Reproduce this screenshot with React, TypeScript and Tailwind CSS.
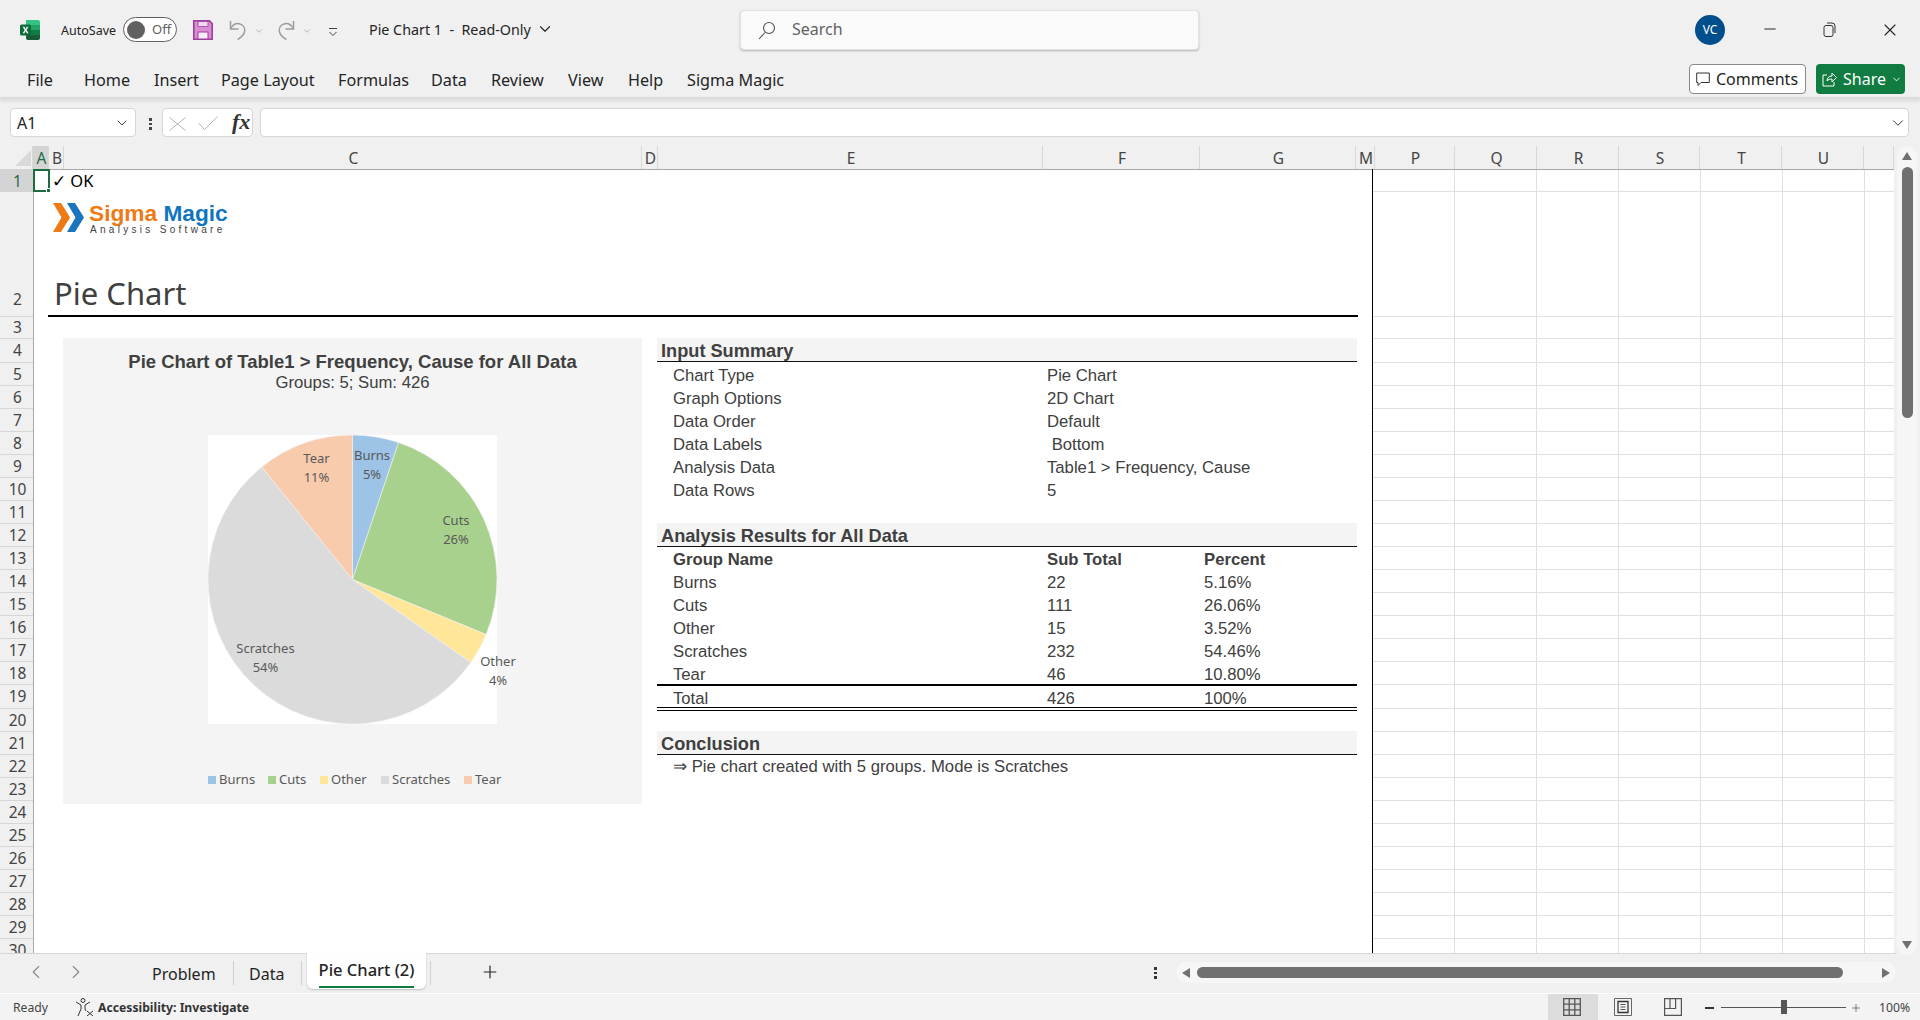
import { ChevronDown, ChevronLeft, ChevronRight, Minus, Plus, X } from "lucide-react";

const columns = [
  { label: "", w: 33 },
  { label: "A", w: 16 },
  { label: "B", w: 15 },
  { label: "C", w: 578 },
  { label: "D", w: 16 },
  { label: "E", w: 385 },
  { label: "F", w: 157 },
  { label: "G", w: 156 },
  { label: "M", w: 19 },
  { label: "P", w: 80 },
  { label: "Q", w: 82 },
  { label: "R", w: 82 },
  { label: "S", w: 81 },
  { label: "T", w: 82 },
  { label: "U", w: 82 },
  { label: "", w: 30 },
];

const rowBottoms = [
  191, 316, 338, 362, 385, 408, 431, 454, 477, 500, 523, 546, 569, 592, 615, 638, 661, 684, 708, 731,
  754, 777, 800, 823, 846, 869, 892, 915, 938, 961,
];

const gridXs = [1455, 1537, 1619, 1701, 1783, 1865];

const tabs = [
  { label: "File", x: 27 },
  { label: "Home", x: 84 },
  { label: "Insert", x: 154 },
  { label: "Page Layout", x: 221 },
  { label: "Formulas", x: 338 },
  { label: "Data", x: 431 },
  { label: "Review", x: 491 },
  { label: "View", x: 568 },
  { label: "Help", x: 628 },
  { label: "Sigma Magic", x: 687 },
];

const slices = [
  { name: "Burns", value: 22, color: "#9dc3e6" },
  { name: "Cuts", value: 111, color: "#a9d18e" },
  { name: "Other", value: 15, color: "#ffe699" },
  { name: "Scratches", value: 232, color: "#dbdbdb" },
  { name: "Tear", value: 46, color: "#f8cbad" },
];

const pieLabels = [
  { a: "Burns", b: "5%", x: 372, y: 455 },
  { a: "Tear", b: "11%", x: 316.5, y: 458 },
  { a: "Cuts", b: "26%", x: 456, y: 520 },
  { a: "Scratches", b: "54%", x: 265.5, y: 648 },
  { a: "Other", b: "4%", x: 498, y: 661 },
];

const legend = [
  { name: "Burns", x: 208, color: "bg-[#9dc3e6]" },
  { name: "Cuts", x: 268, color: "bg-[#a9d18e]" },
  { name: "Other", x: 320, color: "bg-[#ffe699]" },
  { name: "Scratches", x: 381, color: "bg-[#dbdbdb]" },
  { name: "Tear", x: 464, color: "bg-[#f8cbad]" },
];

const summaryRows = [
  { y: 374, a: "Chart Type", b: "Pie Chart" },
  { y: 397, a: "Graph Options", b: "2D Chart" },
  { y: 420, a: "Data Order", b: "Default" },
  { y: 443, a: "Data Labels", b: "\u00a0Bottom" },
  { y: 466, a: "Analysis Data", b: "Table1 > Frequency, Cause" },
  { y: 489, a: "Data Rows", b: "5" },
];

const resultRows = [
  { y: 558, a: "Group Name", b: "Sub Total", c: "Percent", bold: true },
  { y: 581, a: "Burns", b: "22", c: "5.16%" },
  { y: 604, a: "Cuts", b: "111", c: "26.06%" },
  { y: 627, a: "Other", b: "15", c: "3.52%" },
  { y: 650, a: "Scratches", b: "232", c: "54.46%" },
  { y: 673, a: "Tear", b: "46", c: "10.80%" },
  { y: 697, a: "Total", b: "426", c: "100%" },
];

function slicePath(startPct: number, endPct: number) {
  const cx = 144.5;
  const cy = 144.5;
  const r = 144.5;
  const a0 = (startPct * Math.PI * 2) - Math.PI / 2;
  const a1 = (endPct * Math.PI * 2) - Math.PI / 2;
  const large = endPct - startPct > 0.5 ? 1 : 0;
  return `M${cx} ${cy}L${cx + r * Math.cos(a0)} ${cy + r * Math.sin(a0)}A${r} ${r} 0 ${large} 1 ${cx + r * Math.cos(a1)} ${cy + r * Math.sin(a1)}Z`;
}

function PieChart() {
  let acc = 0;
  return (
    <svg width="289" height="289" viewBox="0 0 289 289" className="absolute left-[208px] top-[435px] bg-white">
      {slices.map((s) => {
        const start = acc;
        acc += s.value / 426;
        return <path key={s.name} d={slicePath(start, acc)} fill={s.color} stroke="#f2f2f2" strokeWidth="0.6" />;
      })}
    </svg>
  );
}

function ExcelIcon() {
  return (
    <svg width="20" height="20" viewBox="0 0 20 20" className="absolute left-[20px] top-[20px]">
      <path d="M6 0h12a2 2 0 0 1 2 2v3h-14z" fill="#33c481" />
      <rect x="6" y="5" width="14" height="5" fill="#21a366" />
      <rect x="6" y="10" width="14" height="5" fill="#107c41" />
      <path d="M6 15h14v3a2 2 0 0 1-2 2h-10a2 2 0 0 1-2-2z" fill="#185c37" />
      <rect x="0" y="4.500" width="11" height="11" rx="1.500" fill="#0f6c3a" />
      <path d="M2.700 6.800h1.700l1.200 2.100 1.200-2.100h1.600L6.500 10l2 3.200H6.800L5.600 11.100 4.400 13.200H2.700L4.700 10z" fill="#fff" />
    </svg>
  );
}

function SaveIcon() {
  return (
    <svg width="20" height="20" viewBox="0 0 20 20" className="absolute left-[193px] top-[20px]">
      <path d="M.8.800h15.600l2.800 2.800v15.600H.8z" fill="#d98ed4" stroke="#a03e9e" strokeWidth="1.600" />
      <rect x="5" y="1.500" width="10" height="5" fill="#f0d8ee" stroke="#a03e9e" strokeWidth="0.800" />
      <rect x="5" y="12" width="10" height="7" fill="#f8eef7" stroke="#a03e9e" strokeWidth="1" />
    </svg>
  );
}

function UndoIcon({ flip, left }: { flip?: boolean; left: string }) {
  return (
    <svg width="20" height="22" viewBox="0 0 20 22" fill="none" stroke="#9c9c9c" strokeWidth="1.500" className={`absolute top-[19px] ${left} ${flip ? "-scale-x-100" : ""}`}>
      <path d="M2.500 2v8h8" />
      <path d="M2.800 9.500C5 5.500 8 4.200 11 4.700c4 .8 6.200 4 5.700 7.500-.5 3.200-3 6-7 8.300" />
    </svg>
  );
}

function Logo() {
  return (
    <>
      <svg width="32" height="29" viewBox="0 0 32 29" className="absolute left-[53px] top-[203px]">
        <path d="M0 0h8l9 14.500L8 29H0l8.500-14.500z" fill="#ee7a13" />
        <path d="M14 0h8l9 14.500L22 29h-8l8.500-14.500z" fill="#1b75bc" />
      </svg>
      <div className="absolute left-[89px] top-[203px] whitespace-nowrap text-[22.700px] font-bold leading-[20px] [font-family:Arial,Helvetica,sans-serif]">
        <span className="text-[#ee7a13]">Sigma</span> <span className="text-[#0f75c0]">Magic</span>
      </div>
      <div className="absolute left-[90px] top-[225px] whitespace-nowrap text-[10px] leading-[10px] tracking-[3.300px] text-[#404040] [font-family:Arial,Helvetica,sans-serif]">
        Analysis Software
      </div>
    </>
  );
}

function SectionHeader({ top, title }: { top: number; title: string }) {
  return (
    <div
      className="absolute left-[657px] flex h-[24px] w-[700px] items-center border-b-[1.500px] border-[#111] bg-[#f4f4f4] pl-[4px] pt-[4px] text-[18.200px] font-bold text-[#404040]"
      style={{ top }}
    >
      {title}
    </div>
  );
}

function TableRow({ y, a, b, c, bold }: { y: number; a: string; b: string; c?: string; bold?: boolean }) {
  return (
    <div
      className={`absolute left-[673px] grid h-[22px] w-[684px] grid-cols-[374px_157px_1fr] items-center text-[16.700px] text-[#404040] ${bold ? "font-bold" : ""}`}
      style={{ top: y - 11 }}
    >
      <span>{a}</span>
      <span className="whitespace-pre">{b}</span>
      <span>{c}</span>
    </div>
  );
}

export default function App() {
  return (
    <div className="relative h-[1020px] w-[1920px] overflow-hidden bg-[#f0f0f0] text-[#242424] [font-family:Noto_Sans,sans-serif]">
      {/* title bar */}
      <ExcelIcon />
      <span className="absolute left-[61px] top-[21px] text-[12.500px] leading-5">AutoSave</span>
      <div className="absolute left-[123px] top-[17px] flex h-[25px] w-[54px] items-center rounded-full border border-[#616161] bg-white pl-[3px]">
        <div className="size-[18px] rounded-full bg-[#616161]" />
        <span className="ml-[7px] text-[13px] leading-none text-[#616161]">Off</span>
      </div>
      <SaveIcon />
      <UndoIcon left="left-[228px]" />
      <ChevronDown size={10} className="absolute left-[254px] top-[26px] text-[#a8a8a8]" />
      <UndoIcon flip left="left-[276px]" />
      <ChevronDown size={10} className="absolute left-[302px] top-[26px] text-[#a8a8a8]" />
      <svg width="10" height="10" viewBox="0 0 10 10" fill="none" stroke="#444" className="absolute left-[328px] top-[27px]">
        <path d="M1 1.500h8M1.500 5L5 8.500 8.500 5" />
      </svg>
      <span className="absolute left-[369px] top-[20px] whitespace-pre text-[14.300px] leading-5">Pie Chart 1  -  Read-Only</span>
      <ChevronDown size={18} strokeWidth={1.500} className="absolute left-[536px] top-[20px]" />

      <div className="absolute left-[740px] top-[10px] flex h-[40px] w-[459px] items-center rounded-[4px] border border-[#e3e3e3] bg-[#fafafa] pb-[2px] pl-[51px] shadow-[0_1px_2px_rgba(0,0,0,0.25)]">
        <span className="text-[16px] text-[#616161]">Search</span>
      </div>
      <svg width="20" height="20" viewBox="0 0 20 20" fill="none" stroke="#555" strokeWidth="1.100" className="absolute left-[757px] top-[20px]">
        <circle cx="12" cy="8" r="5.500" />
        <path d="M8 12.500L2 19" />
      </svg>

      <div className="absolute left-[1695px] top-[15px] flex size-[30px] items-center justify-center rounded-full bg-[#004e8c] text-[12px] text-white">VC</div>
      <Minus size={18} strokeWidth={1.300} className="absolute left-[1761px] top-[20px]" />
      <svg width="14" height="16" viewBox="0 0 14 16" fill="none" stroke="#333" className="absolute left-[1823px] top-[22px]">
        <rect x="1" y="3.500" width="9" height="11" rx="2" />
        <path d="M4 1h5a3 3 0 0 1 3 3v7" />
      </svg>
      <X size={20} strokeWidth={1.300} className="absolute left-[1880px] top-[20px]" />

      {/* ribbon tabs */}
      {tabs.map((t) => (
        <span key={t.label} className="absolute top-[69px] whitespace-nowrap text-[16.200px] leading-[22px]" style={{ left: t.x }}>
          {t.label}
        </span>
      ))}
      <div className="absolute left-[1689px] top-[64px] flex h-[30px] w-[117px] items-center rounded-[4px] border border-[#8a8a8a] bg-white pl-[6px] text-[16px]">
        <svg width="14" height="16" viewBox="0 0 14 16" fill="none" stroke="#333" className="mr-[6px]">
          <path d="M.7 2h12.600v9.500H5L2 14.500v-3H.7z" />
        </svg>
        Comments
      </div>
      <div className="absolute left-[1816px] top-[64px] flex h-[30px] w-[89px] items-center rounded-[4px] bg-[#107c41] pl-[6px] text-[16px] text-white">
        <svg width="15" height="16" viewBox="0 0 15 16" fill="none" stroke="#fff" className="mr-[6px]">
          <path d="M5 4H1v11h11v-4" />
          <path d="M5 10c0-3 2-5 5-5V2l4.500 4.500L10 11V8C8 8 6 8.500 5 10z" />
        </svg>
        Share
        <ChevronDown size={11} strokeWidth={2} className="ml-[5px]" />
      </div>
      <div className="absolute left-0 top-[97px] h-[2px] w-full bg-[#dcdcdc] shadow-[0_2px_3px_rgba(0,0,0,0.12)]" />

      {/* formula bar */}
      <div className="absolute left-[10px] top-[108px] flex h-[29px] w-[126px] items-center justify-between rounded-[4px] border border-[#d6d6d6] bg-white pl-[6px] pr-[5px] text-[16px]">
        A1
        <ChevronDown size={16} strokeWidth={1.300} />
      </div>
      <div className="absolute left-[149px] top-[118px] flex flex-col gap-[2px]">
        <div className="size-[2.500px] bg-[#444]" />
        <div className="size-[2.500px] bg-[#444]" />
        <div className="size-[2.500px] bg-[#444]" />
      </div>
      <div className="absolute left-[162px] top-[108px] h-[29px] w-[91px] rounded-[4px] border border-[#d6d6d6] bg-white" />
      <svg width="17" height="14" viewBox="0 0 17 14" fill="none" stroke="#b4b4b4" className="absolute left-[169px] top-[117px]">
        <path d="M.5.500l16 13M16.500.500l-16 13" />
      </svg>
      <svg width="20" height="14" viewBox="0 0 20 14" fill="none" stroke="#b4b4b4" className="absolute left-[198px] top-[116px]">
        <path d="M.5 7l6 6.500L19.500.500" />
      </svg>
      <span className="absolute left-[232px] top-[112px] text-[22px] font-bold italic leading-[20px] text-[#333] [font-family:Liberation_Serif,serif]">fx</span>
      <div className="absolute left-[260px] top-[108px] h-[29px] w-[1649px] rounded-[4px] border border-[#d6d6d6] bg-white" />
      <ChevronDown size={18} strokeWidth={1.200} className="absolute left-[1889px] top-[114px]" />

      {/* column headers */}
      <div className="absolute left-0 top-[146px] flex h-[23px]">
        {columns.map((c, i) => (
          <div
            key={i}
            className={`flex h-full shrink-0 items-center justify-center border-r border-[#d8d8d8] pl-[2px] pt-[2px] text-[15.500px] ${c.label === "A" ? "bg-[#d4d4d4] text-[#1e6b45]" : "text-[#444]"}`}
            style={{ width: c.w }}
          >
            {c.label}
          </div>
        ))}
      </div>
      <div className="absolute left-[15px] top-[150px] h-0 w-0 border-b-[16px] border-l-[16px] border-b-[#d9d9d9] border-l-transparent" />

      {/* sheet */}
      <div className="absolute left-[33px] top-[169px] h-[784px] w-[1861px] overflow-hidden bg-white">
        {rowBottoms.map((b) => (
          <div key={b} className="absolute left-[1339px] right-0 h-px bg-[#e0e0e0]" style={{ top: b - 169 }} />
        ))}
        {gridXs.map((x) => (
          <div key={x} className="absolute bottom-0 top-0 w-px bg-[#e0e0e0]" style={{ left: x - 34 }} />
        ))}
      </div>
      <div className="absolute left-[33px] top-[169px] h-px w-[1861px] bg-[#a8a8a8]" />
      <div className="absolute left-[33px] top-[169px] h-[784px] w-px bg-[#ababab]" />
      <div className="absolute left-[1372px] top-[169px] h-[784px] w-px bg-black" />

      {/* row headers */}
      <div className="absolute left-0 top-[169px] h-[784px] w-[33px] overflow-hidden">
        {rowBottoms.map((b, i) => {
          const top = i === 0 ? 169 : rowBottoms[i - 1];
          return (
            <div
              key={b}
              className={`absolute left-0 flex w-[33px] justify-center pl-[2px] text-[15.500px] ${i === 1 ? "items-end pb-[5px]" : "items-center pt-[2px]"} ${i === 0 ? "bg-[#d4d4d4] text-[#1e6b45]" : "border-b border-[#d6d6d6] text-[#444]"}`}
              style={{ top: top - 169, height: b - top + 1 }}
            >
              {i + 1}
            </div>
          );
        })}
      </div>

      {/* selected cell */}
      <div className="absolute left-[33px] top-[169px] h-[23px] w-[17px] border-2 border-[#1d6b41]" />
      <div className="absolute left-[46px] top-[188px] size-[5px] border border-white bg-[#1d6b41]" />

      {/* sheet content */}
      <span className="absolute left-[52px] top-[170px] whitespace-nowrap text-[16.500px] leading-[22px] text-black">✓ OK</span>
      <Logo />
      <div className="absolute left-[54px] top-[270px] text-[31px] leading-[46px] text-[#404040]">Pie Chart</div>
      <div className="absolute left-[48px] top-[315px] h-[2px] w-[1310px] bg-black" />

      <div className="[font-family:Arial,Helvetica,sans-serif]">
        <div className="absolute left-[63px] top-[338px] h-[466px] w-[579px] bg-[#f4f4f4]" />
        <div className="absolute left-[63px] top-[351px] w-[579px] text-center text-[18.500px] font-bold leading-[22px] text-[#404040]">
          Pie Chart of Table1 &gt; Frequency, Cause for All Data
        </div>
        <div className="absolute left-[63px] top-[372px] w-[579px] text-center text-[16.700px] leading-[22px] text-[#404040]">
          Groups: 5; Sum: 426
        </div>
        <PieChart />
        <SectionHeader top={338} title="Input Summary" />
        {summaryRows.map((r) => (
          <TableRow key={r.a} {...r} />
        ))}
        <SectionHeader top={523} title="Analysis Results for All Data" />
        {resultRows.map((r) => (
          <TableRow key={r.a} {...r} />
        ))}
        <div className="absolute left-[657px] top-[684px] h-[1.500px] w-[700px] bg-black" />
        <div className="absolute left-[657px] top-[707px] h-[4px] w-[700px] border-y border-black" />
        <SectionHeader top={731} title="Conclusion" />
        <div className="absolute left-[673px] top-[756px] text-[16.700px] leading-[22px] text-[#404040]">⇒ Pie chart created with 5 groups. Mode is Scratches</div>
      </div>

      {pieLabels.map((l) => (
        <div
          key={l.a}
          className="absolute w-[80px] -translate-x-1/2 text-center text-[13px] leading-[19px] text-[#595959]"
          style={{ left: l.x, top: l.y - 9 }}
        >
          {l.a}
          <br />
          {l.b}
        </div>
      ))}
      {legend.map((l) => (
        <div key={l.name} className="absolute top-[770px] flex h-[20px] items-center text-[13px] text-[#595959]" style={{ left: l.x }}>
          <div className={`mr-[3px] size-[8px] ${l.color}`} />
          {l.name}
        </div>
      ))}

      {/* vertical scrollbar */}
      <div className="absolute left-[1897px] top-[146px] h-[809px] w-[20px] rounded-full bg-[#f6f6f6]" />
      <div className="absolute left-[1902px] top-[152px] h-0 w-0 border-x-[5px] border-b-[8px] border-x-transparent border-b-[#707070]" />
      <div className="absolute left-[1902px] top-[167px] h-[251px] w-[11px] rounded-full bg-[#707070]" />
      <div className="absolute left-[1902px] top-[941px] h-0 w-0 border-x-[5px] border-t-[8px] border-x-transparent border-t-[#707070]" />

      {/* sheet tabs */}
      <div className="absolute left-0 top-[953px] h-px w-[1896px] bg-[#d6d6d6]" />
      <ChevronLeft size={22} strokeWidth={1.200} className="absolute left-[25px] top-[961px] text-[#888]" />
      <ChevronRight size={22} strokeWidth={1.200} className="absolute left-[65px] top-[961px] text-[#888]" />
      <span className="absolute left-[152px] top-[962px] text-[16px] leading-6">Problem</span>
      <div className="absolute left-[233px] top-[961px] h-[24px] w-px bg-[#d0d0d0]" />
      <span className="absolute left-[249px] top-[962px] text-[16px] leading-6">Data</span>
      <div className="absolute left-[301px] top-[961px] h-[24px] w-px bg-[#d0d0d0]" />
      <div className="absolute left-[307px] top-[953px] flex h-[36px] w-[119px] justify-center rounded-b-[6px] bg-white pt-[5px] shadow-[0_1px_2px_rgba(0,0,0,0.2)]">
        <div className="h-[30px] border-b-2 border-[#107c41] text-[16.500px] font-medium leading-6 text-[#242424]">Pie Chart (2)</div>
      </div>
      <div className="absolute left-[430px] top-[961px] h-[24px] w-px bg-[#d0d0d0]" />
      <Plus size={20} strokeWidth={1.400} className="absolute left-[480px] top-[962px]" />

      {/* horizontal scrollbar */}
      <div className="absolute left-[1154px] top-[967px] flex flex-col gap-[2px]">
        <div className="size-[2.500px] bg-[#333]" />
        <div className="size-[2.500px] bg-[#333]" />
        <div className="size-[2.500px] bg-[#333]" />
      </div>
      <div className="absolute left-[1176px] top-[962px] h-[21px] w-[720px] rounded-full bg-[#f6f6f6]" />
      <div className="absolute left-[1182px] top-[968px] h-0 w-0 border-y-[5px] border-r-[8px] border-y-transparent border-r-[#707070]" />
      <div className="absolute left-[1197px] top-[967px] h-[11px] w-[646px] rounded-full bg-[#707070]" />
      <div className="absolute left-[1882px] top-[968px] h-0 w-0 border-y-[5px] border-l-[8px] border-y-transparent border-l-[#707070]" />

      {/* status bar */}
      <div className="absolute left-0 top-[993px] h-[27px] w-full border-t border-white bg-[#f3f3f3] text-[12.200px]">
        <span className="absolute left-[13px] top-[4px] leading-5 text-[#444]">Ready</span>
        <svg width="19" height="19" viewBox="0 0 19 19" fill="none" stroke="#333" className="absolute left-[75px] top-[4px]">
          <circle cx="8" cy="2.500" r="2" />
          <path d="M1 4l5 3v4l-3 7M15 4l-5 3v4l1 2M12 13l6 5M18 13l-6 5" />
        </svg>
        <span className="absolute left-[98px] top-[4px] font-bold leading-5 text-[#333]">Accessibility: Investigate</span>
        <div className="absolute left-[1548px] top-0 h-[26px] w-[50px] bg-[#dcdcdc]" />
        <svg width="18" height="18" viewBox="0 0 18 18" fill="none" stroke="#555" strokeWidth="1.300" className="absolute left-[1563px] top-[4px]">
          <path d="M.7.700h16.600v16.600H.7zM.7 6.200h16.600M.7 11.800h16.600M6.200.700v16.600M11.800.700v16.600" />
        </svg>
        <svg width="18" height="18" viewBox="0 0 18 18" fill="none" className="absolute left-[1614px] top-[4px]">
          <path d="M.5.500h17v17H.5z" stroke="#666" />
          <path d="M4 3.500h10v11H4z" stroke="#333" strokeWidth="1.300" />
          <path d="M6.500 6.500h5M6.500 9h5M6.500 11.500h5" stroke="#555" />
        </svg>
        <svg width="18" height="18" viewBox="0 0 18 18" fill="none" stroke="#555" strokeWidth="1.200" className="absolute left-[1664px] top-[4px]">
          <path d="M.6.600h16.800v16.800H.6zM.6 10.500h11V.600M6 .600v10" />
        </svg>
        <div className="absolute left-[1705px] top-[13px] h-[1.500px] w-[9px] bg-[#333]" />
        <div className="absolute left-[1721px] top-[13px] h-px w-[125px] bg-[#555]" />
        <div className="absolute left-[1781px] top-[6px] h-[14px] w-[6px] bg-[#555]" />
        <Plus size={12} strokeWidth={1.200} className="absolute left-[1850px] top-[8px] text-[#333]" />
        <span className="absolute left-[1879px] top-[4px] leading-5 text-[#444]">100%</span>
      </div>
    </div>
  );
}
